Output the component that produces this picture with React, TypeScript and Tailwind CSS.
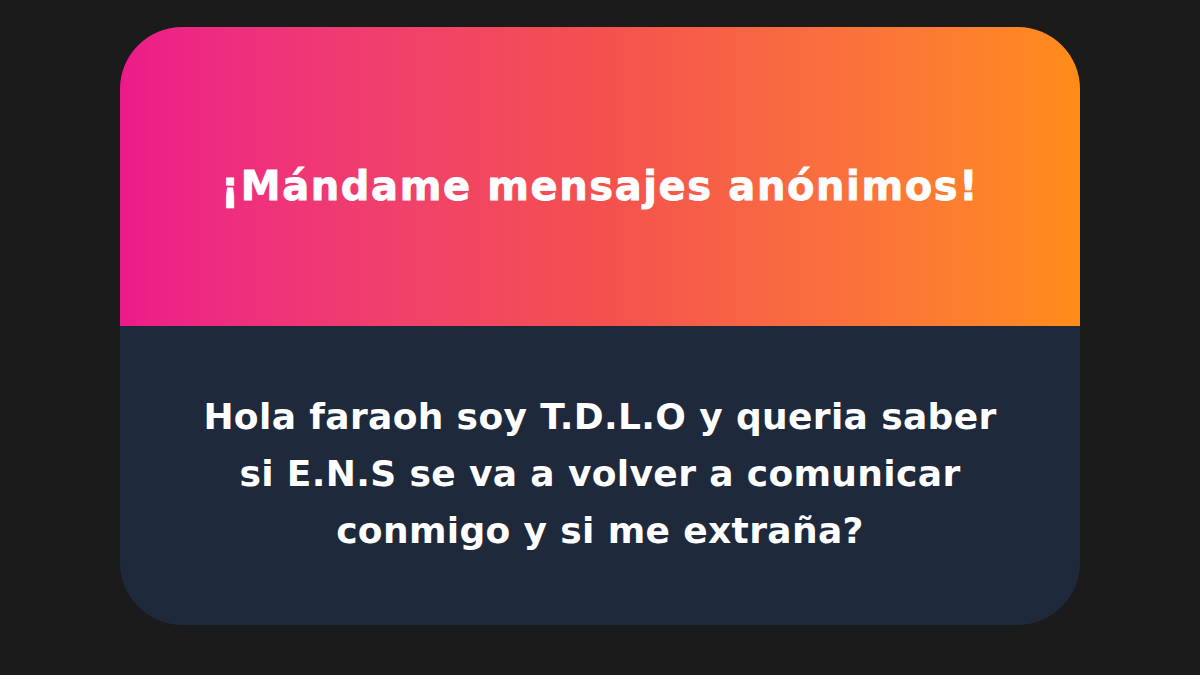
import React from 'react';

export default function App() {
  return (
    <div className="w-[1200px] h-[675px] bg-[#1b1b1b] flex justify-center pt-[27px] font-['DejaVu_Sans',sans-serif]">
      <div className="w-[960px] h-[598px] rounded-[62px] overflow-hidden flex flex-col">
        <div className="h-[299px] bg-gradient-to-r from-[#ec1a8a] via-[#f4504e] to-[#ff8c18] flex items-center justify-center pt-[18px]">
          <h1 className="text-white font-bold text-[40px] tracking-[0.04em] [-webkit-text-stroke:0.8px_white]">¡Mándame mensajes anónimos!</h1>
        </div>
        <div className="flex-1 bg-[#1e293b] flex items-center justify-center pb-[4px]">
          <p className="text-white font-bold text-[36px] leading-[57px] text-center tracking-[0.01em]">
            Hola faraoh soy T.D.L.O y queria saber
            <br />
            si E.N.S se va a volver a comunicar
            <br />
            conmigo y si me extraña?
          </p>
        </div>
      </div>
    </div>
  );
}
